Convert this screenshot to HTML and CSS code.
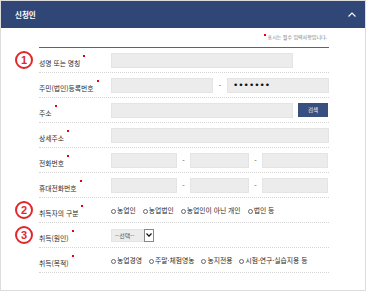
FILE: index.html
```html
<!DOCTYPE html>
<html lang="ko">

<head>
    <meta charset="UTF-8">
    <meta name="viewport" content="width=device-width, initial-scale=1.0">
    <title>신청인</title>
    <link rel="stylesheet" href="styles.css">
</head>

<body>
    <div class="panel">
        <div class="panel-head">
            <h2>신청인</h2>
            <svg class="chevron" width="8" height="5" viewBox="0 0 8 5">
                <polyline points="0.5,4.5 4,1 7.5,4.5" fill="none" stroke="#fff" stroke-width="1.1" />
            </svg>
        </div>
        <div class="panel-body">
            <p class="note"><i class="req"></i> 표시는 필수 입력사항입니다.</p>
            <div class="form">
                <div class="row">
                    <div class="label"><span class="num">1</span><span>성명 또는 명칭<i class="req"></i></span></div>
                    <div class="field"><input type="text" class="inp w-addr"></div>
                </div>
                <div class="row">
                    <div class="label"><span>주민(법인)등록번호<i class="req"></i></span></div>
                    <div class="field">
                        <input type="text" class="inp w-half">
                        <span class="dash">-</span>
                        <input type="password" class="inp w-half pw" value="1234567">
                    </div>
                </div>
                <div class="row">
                    <div class="label"><span>주소<i class="req"></i></span></div>
                    <div class="field">
                        <input type="text" class="inp w-addr">
                        <button class="btn-search">검색</button>
                    </div>
                </div>
                <div class="row">
                    <div class="label"><span>상세주소<i class="req"></i></span></div>
                    <div class="field"><input type="text" class="inp w-full"></div>
                </div>
                <div class="row">
                    <div class="label"><span>전화번호<i class="req"></i></span></div>
                    <div class="field">
                        <input type="text" class="inp w-tel1">
                        <span class="dash">-</span>
                        <input type="text" class="inp w-tel2">
                        <span class="dash">-</span>
                        <input type="text" class="inp w-tel1">
                    </div>
                </div>
                <div class="row">
                    <div class="label"><span>휴대전화번호<i class="req"></i></span></div>
                    <div class="field">
                        <input type="text" class="inp w-tel1">
                        <span class="dash">-</span>
                        <input type="text" class="inp w-tel2">
                        <span class="dash">-</span>
                        <input type="text" class="inp w-tel1">
                    </div>
                </div>
                <div class="row">
                    <div class="label"><span class="num">2</span><span>취득자의 구분<i class="req"></i></span></div>
                    <div class="field">
                        <label class="opt"><input type="radio" name="kind">농업인</label>
                        <label class="opt"><input type="radio" name="kind">농업법인</label>
                        <label class="opt"><input type="radio" name="kind">농업인이 아닌 개인</label>
                        <label class="opt"><input type="radio" name="kind">법인 등</label>
                    </div>
                </div>
                <div class="row">
                    <div class="label"><span class="num">3</span><span>취득(원인)<i class="req"></i></span></div>
                    <div class="field">
                        <div class="select">
                            <select>
                                <option>--선택--</option>
                            </select>
                            <span class="arrow">
                                <svg width="6" height="4" viewBox="0 0 6 4">
                                    <polyline points="0.5,0.5 3,3.2 5.5,0.5" fill="none" stroke="#111" stroke-width="1.2" />
                                </svg>
                            </span>
                        </div>
                    </div>
                </div>
                <div class="row">
                    <div class="label"><span>취득(목적)<i class="req"></i></span></div>
                    <div class="field">
                        <label class="opt"><input type="radio" name="purpose">농업경영</label>
                        <label class="opt"><input type="radio" name="purpose">주말·체험영농</label>
                        <label class="opt"><input type="radio" name="purpose">농지전용</label>
                        <label class="opt"><input type="radio" name="purpose">시험·연구·실습지용 등</label>
                    </div>
                </div>
            </div>
        </div>
    </div>
</body>

</html>
```

FILE: styles.css
```css
body {
    margin: 0;
    font-family: "Noto Sans CJK KR", "Noto Sans", sans-serif;
    background-color: #fff;
    color: #333;
}

.panel {
    box-sizing: border-box;
    width: 366px;
    height: 291px;
    border: 1px solid #dcdcdc;
}

.panel-head {
    height: 27px;
    background-color: #2f4677;
    display: flex;
    align-items: center;
    justify-content: space-between;
    padding: 0 9px 0 14px;
}

.panel-head h2 {
    margin: 0;
    font-size: 7.5px;
    font-weight: bold;
    color: #fff;
}

.panel-body {
    padding: 0 36px 0 38px;
}

.note {
    box-sizing: border-box;
    height: 19px;
    margin: 0;
    padding: 4px 2px 0 0;
    text-align: right;
    font-size: 5px;
    line-height: 10px;
    color: #777;
}

.req {
    display: inline-block;
    width: 2px;
    height: 2px;
    margin-left: 3px;
    background-color: #e60012;
    vertical-align: 9px;
}

.note .req {
    vertical-align: 3px;
}

.form {
    border-top: 1px solid #56637f;
}

.row {
    display: grid;
    grid-template-columns: 72px 1fr;
    height: 24px;
    border-bottom: 1px dotted #d4d4d4;
}

.label {
    display: flex;
    align-items: center;
    padding-top: 2px;
    font-size: 6.8px;
    color: #2b2b2b;
}

.num {
    box-sizing: border-box;
    width: 18px;
    height: 18px;
    margin: -2px 6px 0 -24px;
    border: 2px solid #e3262b;
    border-radius: 50%;
    display: flex;
    align-items: center;
    justify-content: center;
    color: #e3262b;
    font-family: "Liberation Sans", sans-serif;
    font-weight: bold;
    font-size: 11px;
}

.field {
    display: flex;
    align-items: center;
}

.inp {
    box-sizing: border-box;
    height: 15px;
    margin: 0;
    padding: 0 4px;
    border: 1px solid #e4e4e4;
    background-color: #ececec;
    font-size: 7px;
}

.pw {
    padding-left: 5px;
    font-family: "DejaVu Sans", sans-serif;
    font-size: 9px;
    color: #111;
}

.w-addr {
    width: 182px;
}

.w-half {
    width: 102px;
}

.w-full {
    width: 218px;
}

.w-tel1 {
    width: 66px;
}

.w-tel2 {
    width: 59px;
}

.dash {
    width: 13px;
    text-align: center;
    font-size: 7px;
    color: #444;
}

.w-half+.dash {
    width: 14px;
}

.btn-search {
    width: 30px;
    height: 14px;
    margin-left: 5px;
    padding: 0;
    border: none;
    background-color: #37507f;
    color: #fff;
    font-family: inherit;
    font-size: 5.5px;
}

.opt {
    display: inline-flex;
    align-items: center;
    margin-right: 7px;
    font-size: 6.8px;
    color: #2b2b2b;
}

.opt input {
    appearance: none;
    -webkit-appearance: none;
    box-sizing: border-box;
    width: 5px;
    height: 5px;
    margin: 2px 1px 0 0;
    border: 1px solid #666;
    border-radius: 50%;
}

.select {
    display: inline-flex;
    height: 13px;
}

.select select {
    appearance: none;
    -webkit-appearance: none;
    box-sizing: border-box;
    width: 33px;
    height: 13px;
    margin: 0;
    padding: 0 3px;
    border: 1px solid #e4e4e4;
    border-right: none;
    border-radius: 0;
    background-color: #ececec;
    font-family: inherit;
    font-size: 6px;
    color: #555;
}

.arrow {
    box-sizing: border-box;
    width: 10px;
    height: 13px;
    border: 1px solid #888;
    background-color: #fff;
    display: flex;
    align-items: center;
    justify-content: center;
}
```
